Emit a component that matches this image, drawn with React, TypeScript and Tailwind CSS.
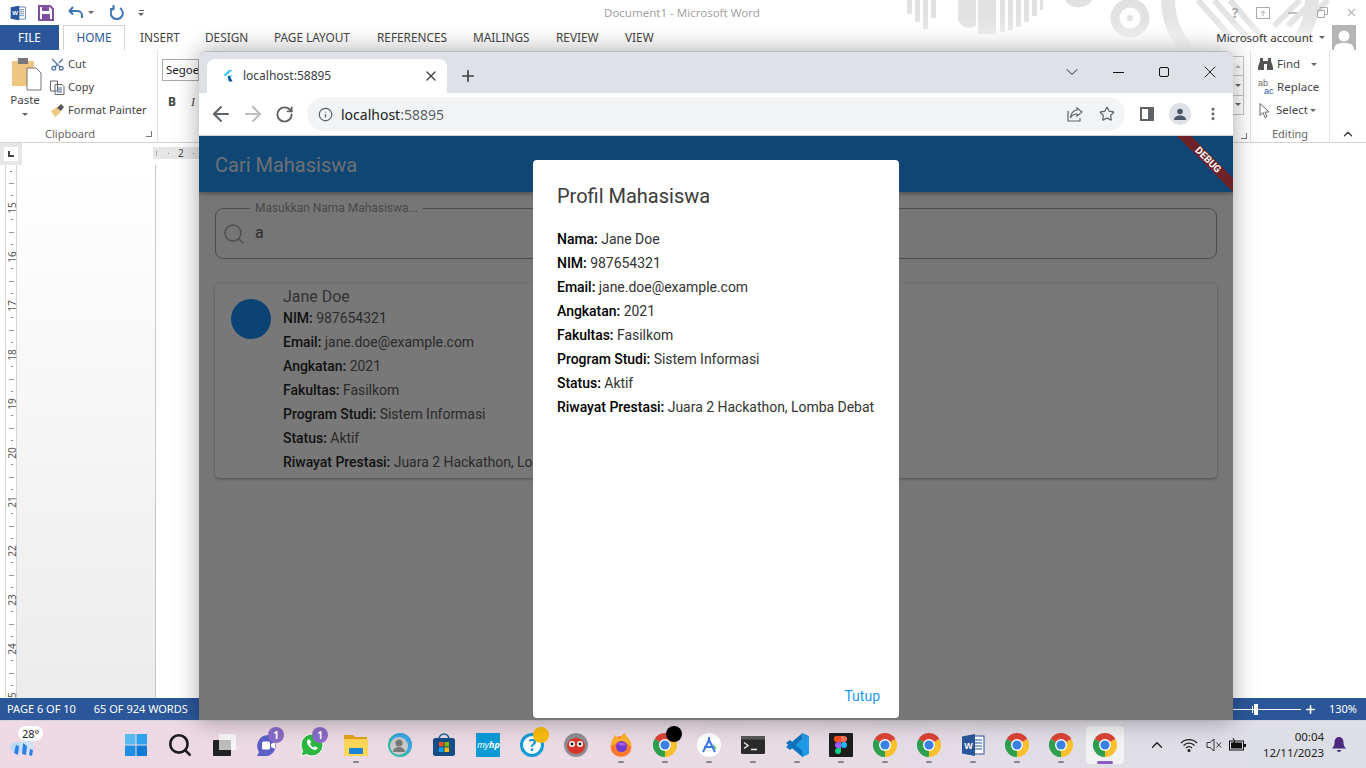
import React from "react";
import {
  ArrowLeft,
  ArrowRight,
  ChevronDown,
  ChevronUp,
  Info,
  MoreVertical,
  Plus,
  RotateCw,
  Scissors,
  Search,
  Star,
  X,
} from "lucide-react";

const RIBBON_TABS = [
  { label: "INSERT", w: "w-[65px]" },
  { label: "DESIGN", w: "w-[69px]" },
  { label: "PAGE LAYOUT", w: "w-[103px]" },
  { label: "REFERENCES", w: "w-[96px]" },
  { label: "MAILINGS", w: "w-[83px]" },
  { label: "REVIEW", w: "w-[69px]" },
  { label: "VIEW", w: "w-[38px]" },
];

const RULER_NUMBERS = [15, 16, 17, 18, 19, 20, 21, 22, 23, 24, 25];

const CARD_ROWS = [
  ["NIM:", "987654321"],
  ["Email:", "jane.doe@example.com"],
  ["Angkatan:", "2021"],
  ["Fakultas:", "Fasilkom"],
  ["Program Studi:", "Sistem Informasi"],
  ["Status:", "Aktif"],
  ["Riwayat Prestasi:", "Juara 2 Hackathon, Lomba Debat"],
];

const ChromeLogo = () => (
  <svg width="24" height="24" viewBox="0 0 24 24">
    <path d="M12 12L22.4 6A12 12 0 0 0 1.6 6Z" fill="#db4437" />
    <path d="M12 12L22.4 6A12 12 0 0 1 12 24Z" fill="#fbc02d" />
    <path d="M12 12L12 24A12 12 0 0 1 1.6 6Z" fill="#2e9e4f" />
    <circle cx="12" cy="12" r="6" fill="#fff" />
    <circle cx="12" cy="12" r="4.6" fill="#3b82e6" />
  </svg>
);

const FlutterLogo = ({ size = 12 }: { size?: number }) => (
  <svg width={size} height={size} viewBox="0 0 12 12">
    <path d="M7 0h3.6L3.4 6.6 1.6 5z" fill="#47c5fb" />
    <path d="M7 5.6h3.6L7.4 8.8 5.6 7z" fill="#47c5fb" />
    <path d="M5.6 7l1.8-1.4 3.2 6H7z" fill="#00569e" />
  </svg>
);

const WordIcon = ({ size = 24 }: { size?: number }) => (
  <svg width={size} height={size} viewBox="0 0 24 24">
    <rect x="8" y="3" width="15" height="18" fill="#fff" stroke="#2b579a" />
    <path d="M14 7h7M14 10h7M14 13h7M14 16h7" stroke="#2b579a" />
    <path d="M1 3.5L14 1v22L1 20.5z" fill="#2b579a" />
    <text x="7.5" y="15.5" fontSize="9" fontWeight="700" fill="#fff" textAnchor="middle" fontFamily="Liberation Sans, sans-serif">
      W
    </text>
  </svg>
);

const TaskIcon = ({ children, dot }: { children: React.ReactNode; dot?: boolean }) => (
  <div className="relative flex w-[44.05px] h-[48px] items-center justify-center">
    {children}
    {dot && <div className="absolute bottom-[6px] left-[19px] h-[2px] w-[6px] rounded-full bg-[#85868a]" />}
  </div>
);

const Badge = () => (
  <div className="absolute left-[22px] top-[6px] flex h-[16px] w-[16px] items-center justify-center rounded-full bg-[#8a6cc9] text-[10px] font-bold leading-none text-white">
    1
  </div>
);

const Taskbar = () => (
  <div className="flex h-[48px] items-center border-t border-[#d6d4da] bg-linear-to-r from-[#eed9e4] via-[#e9dbe4] to-[#dcdfe6] font-['Noto_Sans',sans-serif]">
    <div className="relative h-[48px] w-[114px]">
      <svg className="absolute left-[9px] top-[11px]" width="26" height="26" viewBox="0 0 26 26">
        <ellipse cx="8" cy="15" rx="7" ry="5" fill="#b9d8f6" />
        <ellipse cx="18" cy="14" rx="7" ry="6" fill="#cfe3f8" />
        <path d="M7 13l3 1-1 9-4-2zM14 11l4 3-1 9-4-1zM21 17l3 1-1 6-3-1z" fill="#2d7fe8" />
      </svg>
      <div className="absolute left-[18px] top-[5px] rounded-full bg-white px-[4px] text-[11px] leading-[15px] text-[#222]">28°</div>
    </div>
    <TaskIcon>
      <svg width="24" height="24" viewBox="0 0 24 24">
        <path d="M1 1h10.5v10.5H1z" fill="#58b9f0" />
        <path d="M12.5 1H23v10.5H12.5z" fill="#2ea3ea" />
        <path d="M1 12.5h10.5V23H1z" fill="#1e8fe1" />
        <path d="M12.5 12.5H23V23H12.5z" fill="#0f7bd4" />
      </svg>
    </TaskIcon>
    <TaskIcon>
      <Search size={26} strokeWidth={2.4} color="#1b1b1b" />
    </TaskIcon>
    <TaskIcon>
      <svg width="24" height="24" viewBox="0 0 24 24">
        <rect x="1" y="7" width="18" height="16" rx="1" fill="#222" />
        <rect x="7" y="1" width="17" height="16" rx="1" fill="#f6f6f6" />
        <rect x="7" y="7" width="12" height="10" fill="#bdbdbd" />
      </svg>
    </TaskIcon>
    <TaskIcon>
      <svg width="24" height="24" viewBox="0 0 24 24">
        <path d="M12 2a11 11 0 0 1 0 21H1l2-4A11 11 0 0 1 12 2z" fill="#5b5fc7" />
        <rect x="6" y="8.5" width="8" height="8" rx="1.5" fill="#fff" />
        <path d="M15 11l4-2v7l-4-2z" fill="#fff" />
      </svg>
      <Badge />
    </TaskIcon>
    <TaskIcon>
      <svg width="24" height="24" viewBox="0 0 24 24">
        <path d="M12 1a11 11 0 0 1 0 22c-2 0-3.700-.5-5.300-1.400L1 23l1.500-5.500A11 11 0 0 1 12 1z" fill="#2cb742" stroke="#fff" />
        <path d="M8 6.500c-1.500 1-1.500 3 0 5.500s4 4.500 6.500 5c1.500.2 3-.8 3.200-2.200l-2.700-1.500-1.300 1.300c-1.600-.7-3-2.200-3.700-3.800l1.300-1.200L9.700 6.500z" fill="#fff" />
      </svg>
      <Badge />
    </TaskIcon>
    <TaskIcon dot>
      <svg width="24" height="24" viewBox="0 0 24 24">
        <path d="M0 2h9l2 2h12v4H0z" fill="#e3a21a" />
        <rect y="6" width="24" height="17" rx="1" fill="#fcd758" />
        <rect x="5" y="15" width="14" height="6" rx="1" fill="#1b84d6" />
      </svg>
    </TaskIcon>
    <TaskIcon>
      <svg width="24" height="24" viewBox="0 0 24 24">
        <circle cx="12" cy="12" r="12" fill="#2bb5a5" />
        <path d="M12 0a12 12 0 0 1 12 12c0 4-3 8-7 10 3-3 4-8 1-11S8 8 4 12c-1-2-1-5 0-7a12 12 0 0 1 8-5z" fill="#3ba6e6" />
        <circle cx="11" cy="13" r="9" fill="#c8c8c8" />
        <circle cx="11" cy="10" r="3.500" fill="#777" />
        <path d="M5 19a6 5 0 0 1 12 0z" fill="#777" />
      </svg>
    </TaskIcon>
    <TaskIcon>
      <svg width="24" height="24" viewBox="0 0 24 24">
        <path d="M7 6a5 5 0 0 1 10 0" fill="none" stroke="#1d5fa0" strokeWidth="1.500" />
        <rect x="1" y="5" width="22" height="18" rx="2.500" fill="#174c85" />
        <rect x="7" y="9" width="4.500" height="4.500" fill="#f25022" />
        <rect x="12.500" y="9" width="4.500" height="4.500" fill="#7fba00" />
        <rect x="7" y="14.500" width="4.500" height="4.500" fill="#00a4ef" />
        <rect x="12.500" y="14.500" width="4.500" height="4.500" fill="#ffb900" />
      </svg>
    </TaskIcon>
    <TaskIcon>
      <div className="flex h-[24px] w-[24px] items-center justify-center bg-[#0d9bd8] text-[9px] italic leading-none text-white">
        my<span className="font-bold">hp</span>
      </div>
    </TaskIcon>
    <TaskIcon>
      <div className="flex h-[24px] w-[24px] items-center justify-center rounded-full border-[3px] border-[#0f9ad8] bg-white text-[16px] font-bold leading-none text-[#0f9ad8]">
        ?
      </div>
      <div className="absolute left-[23px] top-[6px] h-[16px] w-[16px] rounded-full bg-[#fcbc0d]" />
    </TaskIcon>
    <TaskIcon>
      <svg width="24" height="24" viewBox="0 0 24 24">
        <circle cx="12" cy="12" r="12" fill="#8d8f94" />
        <ellipse cx="12" cy="13" rx="9" ry="8" fill="#d8352c" />
        <circle cx="8" cy="11" r="3" fill="#fff" />
        <circle cx="16" cy="11" r="3" fill="#fff" />
        <circle cx="8" cy="11" r="1.400" fill="#222" />
        <circle cx="16" cy="11" r="1.400" fill="#222" />
      </svg>
    </TaskIcon>
    <TaskIcon dot>
      <svg width="24" height="24" viewBox="0 0 24 24">
        <circle cx="12" cy="13.500" r="10.500" fill="#ff7a2f" />
        <path d="M2 13C2 7 5 3 7 2c0 3 2 3 5 3 0-2 1-4 4-5 0 2 2 3 4 6s3 6 2 9c-3-7-13-9-16-4z" fill="#ffb02e" />
        <circle cx="12.500" cy="13.500" r="5.500" fill="#6f3bd5" />
        <path d="M8 11c2-2 7-2 9 1l-4 1z" fill="#a95de8" />
      </svg>
    </TaskIcon>
    <TaskIcon dot>
      <ChromeLogo />
      <div className="absolute left-[23px] top-[5px] h-[16px] w-[16px] rounded-full bg-black" />
    </TaskIcon>
    <TaskIcon dot>
      <svg width="24" height="24" viewBox="0 0 24 24">
        <circle cx="12" cy="12" r="12" fill="#fff" />
        <path d="M12 4v4M12 7L6 19M12 7l6 12M7 14h10" stroke="#3f76e4" strokeWidth="2" fill="none" />
        <path d="M16 10l4 6h-3z" fill="#6cc57f" />
      </svg>
    </TaskIcon>
    <TaskIcon dot>
      <svg width="24" height="24" viewBox="0 0 24 24">
        <rect y="3" width="24" height="18" rx="1.500" fill="#2b2b2b" />
        <rect y="3" width="24" height="3.500" fill="#585858" />
        <path d="M3 9.500l4 3-4 3" stroke="#e8e8e8" strokeWidth="1.500" fill="none" />
        <path d="M10 16.500h6" stroke="#e8e8e8" strokeWidth="1.500" />
      </svg>
    </TaskIcon>
    <TaskIcon dot>
      <svg width="24" height="24" viewBox="0 0 24 24">
        <path d="M17.500 0L24 3v18l-6.500 3L8 14l9.500-8z" fill="#1f9be6" />
        <path d="M17.500 0v6L5 17l-4-3z" fill="#0e74c0" />
        <path d="M1 10l4-3 12.500 11v6z" fill="#0e74c0" />
      </svg>
    </TaskIcon>
    <TaskIcon dot>
      <svg width="24" height="24" viewBox="0 0 24 24">
        <rect width="24" height="24" rx="1" fill="#1e1e1e" />
        <path d="M7 3h5v6H9a3 3 0 0 1-2-6z" fill="#f24e1e" />
        <path d="M12 3h3a3 3 0 0 1 0 6h-3z" fill="#ff7262" />
        <path d="M9 9h3v6H9a3 3 0 0 1 0-6z" fill="#a259ff" />
        <circle cx="15" cy="12" r="3" fill="#1abcfe" />
        <path d="M9 15h3v3a3 3 0 1 1-3-3z" fill="#0acf83" />
      </svg>
    </TaskIcon>
    <TaskIcon dot>
      <ChromeLogo />
    </TaskIcon>
    <TaskIcon dot>
      <ChromeLogo />
    </TaskIcon>
    <TaskIcon dot>
      <WordIcon />
    </TaskIcon>
    <TaskIcon dot>
      <ChromeLogo />
    </TaskIcon>
    <TaskIcon dot>
      <ChromeLogo />
    </TaskIcon>
    <TaskIcon>
      <div className="absolute left-[3px] top-[5px] h-[38px] w-[38px] rounded-[4px] bg-[#f2f2f4]" />
      <div className="relative">
        <ChromeLogo />
      </div>
      <div className="absolute bottom-[5px] left-[14px] h-[3px] w-[16px] rounded-full bg-[#8a5cc4]" />
    </TaskIcon>
    <div className="flex h-[48px] flex-1 items-center text-[#222]">
      <ChevronUp size={18} strokeWidth={1.800} className="ml-[21px]" />
      <svg className="ml-[14px]" width="18" height="16" viewBox="0 0 18 16" fill="none" stroke="#222" strokeWidth="1.200">
        <path d="M1 6a11 11 0 0 1 16 0M3.500 8.500a7.500 7.500 0 0 1 11 0M6 11a4 4 0 0 1 6 0" />
        <circle cx="9" cy="13.500" r="1" fill="#222" />
      </svg>
      <svg className="ml-[8px]" width="16" height="14" viewBox="0 0 16 14" fill="none" stroke="#333" strokeWidth="1">
        <path d="M1 4.500h3L8 1v12L4 9.500H1zM10.500 4.500l4.500 5M15 4.500l-4.500 5" />
      </svg>
      <svg className="ml-[7px]" width="17" height="14" viewBox="0 0 17 14">
        <rect x="0.500" y="3" width="14" height="9" fill="none" stroke="#111" />
        <rect x="2" y="4.500" width="11" height="6" fill="#111" />
        <rect x="15" y="6" width="2" height="3" fill="#111" />
        <path d="M4 0l2 4-2 1 1 3" stroke="#111" fill="none" />
      </svg>
      <div className="w-[78px] text-right text-[11.500px] leading-[16px] text-[#222]">
        <div>00:04</div>
        <div>12/11/2023</div>
      </div>
      <svg className="ml-[8px]" width="14" height="16" viewBox="0 0 14 16">
        <path d="M7 0c3 0 4.500 2.500 4.500 5.500 0 3 1 4.500 2.500 6H0c1.500-1.500 2.500-3 2.500-6C2.500 2.500 4 0 7 0z" fill="#4b2a7d" />
        <path d="M5 13h4a2 2 0 0 1-4 0z" fill="#4b2a7d" />
      </svg>
    </div>
  </div>
);

const TitleDecor = () => (
  <svg className="absolute left-[880px] top-0" width="486" height="50" viewBox="0 0 486 50" fill="none">
    <g fill="#e2e2e2">
      <rect x="27" y="0" width="5" height="14" />
      <rect x="35" y="0" width="5" height="22" />
      <rect x="43" y="0" width="5" height="29" />
      <rect x="51" y="0" width="5" height="18" />
      <path d="M78 0h18v26a12 12 0 0 1-18-6zM98 0h18v34h-18zM120 0h5v32h-5zM128 0h5v30h-5zM136 0h5v27h-5zM144 0h5v22h-5zM152 0h5v16h-5zM160 0h3v10h-3z" />
      <path d="M185 0h27a14 10 0 0 1-27 0z" />
    </g>
    <circle cx="250" cy="18" r="15" stroke="#e2e2e2" strokeWidth="9" />
    <circle cx="250" cy="18" r="3" fill="#e2e2e2" />
    <circle cx="360" cy="0" r="72" stroke="#e4e4e4" strokeWidth="14" />
    <path d="M318 0l46 52M334 0l46 52M350 0l36 42M394 26L420 0M408 26L434 0M422 26L448 0" stroke="#e4e4e4" strokeWidth="6" />
  </svg>
);

const WordTitleBar = () => (
  <div className="relative flex h-[25px] items-center">
    <TitleDecor />
    <div className="absolute inset-x-0 top-0 h-[50px] bg-linear-to-b from-transparent from-40% to-white" />
    <div className="relative flex h-[25px] flex-1 items-center pl-[10px]">
      <WordIcon size={16} />
      <svg className="ml-[12px]" width="16" height="16" viewBox="0 0 16 16">
        <path d="M1 1h11l3 3v11H1z" fill="none" stroke="#7f4fa0" strokeWidth="2" />
        <rect x="4" y="2" width="7" height="4" fill="#7f4fa0" />
        <rect x="4" y="9" width="8" height="5" fill="#7f4fa0" />
      </svg>
      <svg className="ml-[14px]" width="16" height="14" viewBox="0 0 16 14" fill="none" stroke="#3f75b5" strokeWidth="2">
        <path d="M5 1L1.500 5 5 8.500M2 5h7a5 4 0 0 1 5 4v3" />
      </svg>
      <div className="ml-[4px] h-0 w-0 border-x-[3px] border-t-[3px] border-x-transparent border-t-[#666]" />
      <svg className="ml-[16px]" width="14" height="15" viewBox="0 0 14 15" fill="none" stroke="#3f75b5" strokeWidth="2">
        <path d="M3.500 3A6 6 0 1 0 10 3M3.500 0v4H0" />
      </svg>
      <div className="ml-[14px] flex flex-col items-center gap-[2px]">
        <div className="h-px w-[5px] bg-[#666]" />
        <div className="h-0 w-0 border-x-[3px] border-t-[3px] border-x-transparent border-t-[#666]" />
      </div>
      <div className="ml-[460px] text-[11.500px] text-[#a3a3a3]">Document1 - Microsoft Word</div>
    </div>
    <div className="relative flex items-center text-[#a9a9a9]">
      <div className="w-[16px] text-center text-[14px] font-bold">?</div>
      <svg className="ml-[13px]" width="14" height="12" viewBox="0 0 14 12" fill="none" stroke="#a9a9a9">
        <path d="M.5.500h13v11H.5zM7 9V4M5 6l2-2 2 2" />
      </svg>
      <div className="ml-[18px] h-[2px] w-[9px] bg-[#bdbdbd]" />
      <svg className="ml-[20px]" width="11" height="11" viewBox="0 0 11 11" fill="none" stroke="#a9a9a9">
        <path d="M.5 3.500h7v7h-7zM3 3.500v-3h7.500v7h-3" />
      </svg>
      <X size={13} color="#b5b5b5" className="ml-[17px] mr-[8px]" />
    </div>
  </div>
);

const WordTabs = () => (
  <div className="relative flex h-[25px] items-center text-[11.800px] text-[#444]">
    <div className="flex h-[25px] w-[59px] items-center justify-center bg-[#2b579a] text-white">FILE</div>
    <div className="relative z-10 ml-[4px] flex h-[25px] w-[62px] items-center justify-center border-x border-t border-[#d4d4d4] bg-white text-[#2b579a]">
      HOME
    </div>
    <div className="relative ml-[15px] flex items-center">
      {RIBBON_TABS.map((tab) => (
        <div key={tab.label} className={tab.w}>
          {tab.label}
        </div>
      ))}
    </div>
    <div className="relative ml-auto mr-[10px] flex items-center text-[11.500px] text-[#333]">
      Microsoft account
      <div className="ml-[6px] mr-[7px] h-0 w-0 border-x-[3px] border-t-[3px] border-x-transparent border-t-[#666]" />
      <div className="flex h-[25px] w-[24px] items-end justify-center overflow-hidden bg-[#b5b5b5]">
        <svg width="24" height="22" viewBox="0 0 24 22">
          <circle cx="12" cy="8" r="5.500" fill="#fff" />
          <path d="M2 22c0-6 4-7 10-7s10 1 10 7z" fill="#fff" />
        </svg>
      </div>
    </div>
  </div>
);

const ClipboardGroup = () => (
  <div className="flex h-[93px] w-[158px] flex-col border-r border-[#e1e1e1]">
    <div className="flex h-[77px]">
      <div className="flex w-[50px] flex-col items-center pt-[8px]">
        <svg className="ml-[3px]" width="30" height="33" viewBox="0 0 30 33">
          <rect x="0" y="3" width="22" height="25" rx="1" fill="#eec67f" />
          <rect x="6" y="0" width="10" height="6" fill="#777" />
          <path d="M15 10h9l5 5v17H15z" fill="#fff" stroke="#777" />
        </svg>
        <div className="mt-[1px] text-[11.500px] leading-[16px] text-[#444]">Paste</div>
        <div className="mt-[5px] h-0 w-0 border-x-[3px] border-t-[3px] border-x-transparent border-t-[#666]" />
      </div>
      <div className="flex flex-col gap-[7px] pt-[6px] text-[11.200px] leading-[16px] text-[#444]">
        <div className="flex h-[16px] items-center gap-[3px]">
          <Scissors size={15} color="#4a6f9c" className="-rotate-90" />
          <span>Cut</span>
        </div>
        <div className="flex h-[16px] items-center gap-[3px]">
          <svg width="15" height="15" viewBox="0 0 15 15" fill="none" stroke="#666">
            <path d="M.5 1h7v10h-7zM5 4.500h7l2 2v8H5z" fill="#fff" />
            <path d="M7 8h5M7 10h5M7 12h5" stroke="#4a6f9c" />
          </svg>
          <span>Copy</span>
        </div>
        <div className="flex h-[16px] items-center gap-[3px]">
          <svg width="15" height="15" viewBox="0 0 15 15">
            <path d="M1 8l6-4 4 5-6 5z" fill="#eec67f" />
            <path d="M7 5l4-4 3 3-3 4z" fill="#555" />
          </svg>
          <span>Format Painter</span>
        </div>
      </div>
    </div>
    <div className="flex h-[14px] items-center pl-[45px] pr-[5px] text-[11px] leading-[14px] text-[#666]">
      Clipboard
      <div className="ml-auto h-[6px] w-[6px] border-b border-r border-[#777]" />
    </div>
  </div>
);

const EditingGroup = () => (
  <div className="flex h-[93px] items-stretch">
    <div className="flex w-[18px] flex-col border-r border-[#e1e1e1]">
      <div className="mt-[6px] flex h-[59px] w-[11px] flex-col border border-l-0 border-[#c4c4c4]">
        <div className="flex flex-1 items-center justify-center border-b border-[#c4c4c4]">
          <div className="h-0 w-0 border-x-[3px] border-b-[3px] border-x-transparent border-b-[#bbb]" />
        </div>
        <div className="flex flex-1 items-center justify-center border-b border-[#c4c4c4]">
          <div className="h-0 w-0 border-x-[3px] border-t-[3px] border-x-transparent border-t-[#666]" />
        </div>
        <div className="flex flex-1 items-center justify-center">
          <div className="h-0 w-0 border-x-[3px] border-t-[3px] border-x-transparent border-t-[#666]" />
        </div>
      </div>
      <div className="mb-[4px] ml-[8px] mt-auto h-[6px] w-[6px] border-b border-r border-[#777]" />
    </div>
    <div className="flex w-[79px] flex-col border-r border-[#e1e1e1] text-[11.500px] leading-[16px] text-[#444]">
      <div className="flex flex-col gap-[7px] pl-[7px] pt-[6px]">
        <div className="flex h-[16px] items-center gap-[4px]">
          <svg width="15" height="14" viewBox="0 0 15 14" fill="#555">
            <path d="M2 1h3v3h5V1h3v3l2 6v3H9V7H6v6H0v-3l2-6z" />
          </svg>
          <span>Find</span>
          <div className="ml-[7px] h-0 w-0 border-x-[3px] border-t-[3px] border-x-transparent border-t-[#666]" />
        </div>
        <div className="flex h-[16px] items-center gap-[3px]">
          <svg width="16" height="16" viewBox="0 0 16 16" fontFamily="Liberation Sans, sans-serif" fontSize="9">
            <text x="0" y="7" fill="#666">ab</text>
            <text x="6" y="15" fill="#2b579a">ac</text>
          </svg>
          <span>Replace</span>
        </div>
        <div className="flex h-[16px] items-center gap-[4px]">
          <svg width="14" height="15" viewBox="0 0 14 15" fill="#fff" stroke="#666">
            <path d="M2 .500v12l3-3 2 5 2-1-2-4.500h4z" />
          </svg>
          <span>Select</span>
          <div className="-ml-[2px] h-0 w-0 border-x-[3px] border-t-[3px] border-x-transparent border-t-[#666]" />
        </div>
      </div>
      <div className="mb-[1px] mt-auto h-[16px] text-center text-[11px] text-[#666]">Editing</div>
    </div>
    <div className="flex w-[36px] items-end justify-center pb-[2px]">
      <ChevronUp size={14} strokeWidth={2.500} color="#444" />
    </div>
  </div>
);

const VerticalRuler = () => (
  <div className="ml-[5px] w-[12px] border-x border-[#d6d6d6] bg-white text-[#555]">
    <div className="flex h-[12px] items-center justify-center">
      <div className="h-px w-[2px] bg-[#888]" />
    </div>
    {RULER_NUMBERS.map((n) => (
      <div key={n} className="grid h-[49px] grid-rows-4 place-items-center">
        <div className="h-px w-[5px] bg-[#999]" />
        <div className="h-px w-[2px] bg-[#888]" />
        <div className="-rotate-90 text-[10px] leading-none">{n}</div>
        <div className="h-px w-[2px] bg-[#888]" />
      </div>
    ))}
  </div>
);

const ChromeWindow = () => (
  <div className="absolute bottom-[48px] left-[199px] top-[51px] flex w-[1034px] flex-col overflow-hidden rounded-t-[8px] border-t border-[#b9b9b9] font-['Noto_Sans',sans-serif] shadow-[0_0_24px_rgba(0,0,0,0.35)]">
    {/* tab strip */}
    <div className="flex h-[41px] items-end bg-[#dee1e6] pl-[8px]">
      <div className="flex h-[34px] w-[240px] items-center rounded-t-[8px] bg-white pl-[15px] pr-[8px] text-[12px] text-[#3c4043]">
        <FlutterLogo />
        <span className="ml-[9px]">localhost:58895</span>
        <X size={16} strokeWidth={2} color="#444" className="ml-auto" />
      </div>
      <Plus size={18} strokeWidth={2.200} color="#3c4043" className="mb-[8px] ml-[12px]" />
      <div className="mb-[11px] ml-auto flex items-center text-[#111]">
        <ChevronDown size={20} strokeWidth={1.100} />
        <div className="ml-[31px] h-px w-[11px] bg-[#111]" />
        <div className="ml-[35px] h-[10px] w-[10px] rounded-[2px] border border-[#111]" />
        <X size={20} strokeWidth={1.100} className="ml-[31px] mr-[13px]" />
      </div>
    </div>
    {/* toolbar */}
    <div className="flex h-[43px] items-center border-b border-[#dadce0] bg-white pl-[10px] text-[#5f6368]">
      <ArrowLeft size={24} strokeWidth={2} />
      <ArrowRight size={24} strokeWidth={2} color="#babcbe" className="ml-[8px]" />
      <RotateCw size={19} strokeWidth={2.400} className="ml-[10px]" />
      <div className="ml-[13px] flex h-[34px] w-[818px] items-center rounded-full bg-[#f1f3f4] pl-[11px] pr-[10px]">
        <Info size={15} strokeWidth={2} />
        <span className="ml-[8px] text-[14px] text-[#202124]">
          localhost<span className="text-[#5f6368]">:58895</span>
        </span>
        <svg className="ml-auto" width="16" height="15" viewBox="0 0 16 15" fill="none" stroke="#5f6368" strokeWidth="1.200">
          <path d="M1 4v10h12v-3M10 1l5 4-5 4V7C7 7 5 8 3.500 11 4 6 6 3.500 10 3z" />
        </svg>
        <Star size={16} strokeWidth={1.800} className="ml-[16px]" />
      </div>
      <div className="ml-[15px] flex h-[14px] w-[14px] justify-start border-[2px] border-[#5f6368] border-r-[6px]" />
      <div className="ml-[15px] flex h-[22px] w-[22px] items-center justify-center rounded-full bg-[#dee1e6]">
        <svg width="12" height="12" viewBox="0 0 12 12" fill="#4a5568">
          <circle cx="6" cy="3.500" r="2.800" />
          <path d="M0 12c0-3 2.500-4.500 6-4.500S12 9 12 12z" />
        </svg>
      </div>
      <MoreVertical size={16} strokeWidth={2.400} className="ml-[14px]" />
    </div>
    {/* flutter page, dimmed by the open dialog */}
    <div className="relative flex flex-1 flex-col bg-[#767676] font-['Roboto',sans-serif]">
      <div className="relative flex h-[56px] items-center overflow-hidden bg-[#0f4674] pl-[16px] pt-[2px] text-[20px] text-[#6e7174] shadow-[0_2px_4px_rgba(0,0,0,0.3)]">
        Cari Mahasiswa
        <div className="absolute right-[-35px] top-[19px] flex h-[10px] w-[120px] rotate-45 items-center justify-center bg-[#6f2128] text-[10px] font-bold leading-none text-white">
          DEBUG
        </div>
      </div>
      <div className="px-[16px] pt-[16px] tracking-[-0.03px]">
        <div className="relative flex h-[51px] items-center rounded-[8px] border border-[#4e4e4e] pl-[6px] text-[16px] text-[#2f2f2f]">
          <Search size={24} strokeWidth={1.500} color="#4f4f4f" />
          <span className="-mt-[2px] ml-[9px]">a</span>
          <div className="absolute -top-[8px] left-[34px] bg-[#767676] px-[5px] text-[12px] leading-[14px] text-[#4a4a4a]">
            Masukkan Nama Mahasiswa...
          </div>
        </div>
        <div className="mt-[25px] flex h-[194px] rounded-[4px] bg-[#787878] pl-[16px] shadow-[0_1px_3px_rgba(0,0,0,0.35)]">
          <div className="mr-[12px] mt-[15px] h-[40px] w-[40px] rounded-full bg-[#0b4474]" />
          <div className="pt-[3px] text-[14px] leading-[24px] text-[#2b2b2b]">
            <div className="h-[19px] text-[16px] leading-[20px] text-[#333]">Jane Doe</div>
            {CARD_ROWS.map(([label, value]) => (
              <div key={label} className="whitespace-nowrap">
                <span className="font-medium text-[#111]">{label}</span> {value}
              </div>
            ))}
          </div>
        </div>
      </div>
    </div>
  </div>
);

const ProfileDialog = () => (
  <div className="absolute left-[533px] top-[160px] flex h-[558px] w-[366px] flex-col rounded-[4px] bg-white px-[24px] pt-[24px] font-['Roboto',sans-serif]">
    <div className="text-[20px] leading-[24px] text-[#3a3a3a]">Profil Mahasiswa</div>
    <div className="mt-[19px] text-[14px] leading-[24px] tracking-[-0.03px] text-[#333]">
      <div>
        <span className="font-medium text-black">Nama:</span> Jane Doe
      </div>
      {CARD_ROWS.map(([label, value]) => (
        <div key={label} className="whitespace-nowrap">
          <span className="font-medium text-black">{label}</span> {value}
        </div>
      ))}
    </div>
    <div className="-mr-[5px] mt-auto pb-[12px] text-right text-[14px] leading-[20px] text-[#2196f3]">Tutup</div>
  </div>
);

const App = () => {
  return (
    <div className="relative flex h-[768px] w-[1366px] flex-col overflow-hidden bg-white font-['Noto_Sans',sans-serif]">
      <div className="flex h-[720px] flex-col">
        <WordTitleBar />
        <WordTabs />
        <div className="flex h-[93px] items-stretch justify-between border-b border-[#d4d4d4] bg-white">
          <div className="flex">
            <ClipboardGroup />
            <div className="pl-[4px] pt-[9px]">
              <div className="h-[22px] w-[37px] overflow-hidden border border-[#aaa] pl-[3px] text-[11.500px] leading-[20px] text-[#222]">Segoe</div>
              <div className="mt-[13px] flex gap-[15px] pl-[6px] text-[12px] leading-[16px] text-[#444]">
                <b>B</b>
                <i className="font-['Liberation_Serif',serif]">I</i>
              </div>
            </div>
          </div>
          <EditingGroup />
        </div>
        <div className="flex h-[22px] bg-white">
          <div className="flex h-[22px] w-[22px] items-center justify-center bg-[#e6e6e6]">
            <div className="flex h-[14px] w-[14px] items-center justify-center bg-white">
              <div className="h-[6px] w-[6px] border-b-2 border-l-2 border-[#444]" />
            </div>
          </div>
          <div className="ml-[131px] mt-[4px] flex h-[12px] w-[46px] items-center bg-[#e6e6e6] pl-[3px] text-[10px] leading-none text-[#444]">
            <div className="h-[5px] w-px bg-[#aaa]" />
            <div className="ml-[11px] h-px w-px bg-[#888]" />
            <span className="ml-[9px]">2</span>
            <div className="ml-[9px] h-px w-px bg-[#888]" />
          </div>
        </div>
        <div className="flex min-h-0 flex-1 overflow-hidden">
          <div className="w-[17px] bg-white">
            <VerticalRuler />
          </div>
          <div className="w-[139px] border-r border-[#c8c8c8] bg-linear-to-b from-white to-[#ececec]" />
          <div className="flex-1 bg-white" />
        </div>
        <div className="flex h-[22px] items-center bg-[#2b579a] pl-[7px] text-[11px] text-white">
          <span>PAGE 6 OF 10</span>
          <span className="ml-[18px]">65 OF 924 WORDS</span>
          <div className="ml-auto flex items-center">
            <div className="relative h-px w-[69px] bg-white">
              <div className="absolute -top-[3px] left-[20px] h-[7px] w-px bg-white" />
              <div className="absolute -top-[5px] left-[22px] h-[11px] w-[4px] bg-white" />
            </div>
            <Plus size={13} strokeWidth={3} className="ml-[3px]" />
            <span className="ml-[12px] mr-[9px]">130%</span>
          </div>
        </div>
      </div>
      <Taskbar />
      <ChromeWindow />
      <ProfileDialog />
    </div>
  );
};

export default App;
